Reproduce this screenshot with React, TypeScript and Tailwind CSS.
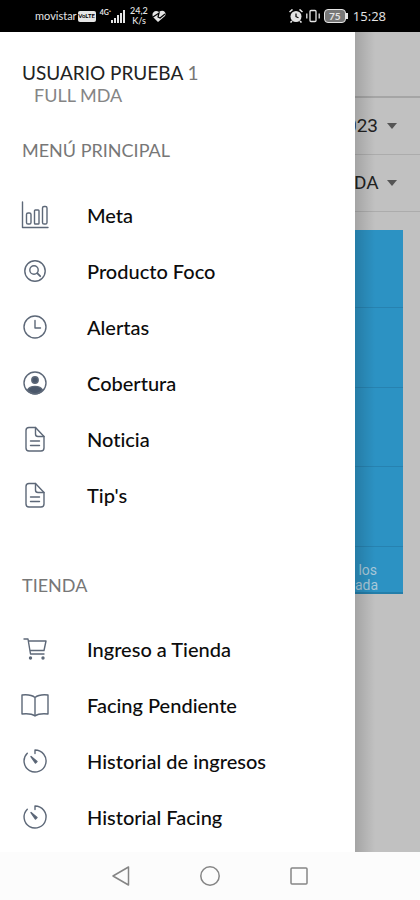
import React from "react";

type IconProps = { children: React.ReactNode };

function Icon({ children }: IconProps) {
  return (
    <svg viewBox="0 0 28 28" className="size-7 shrink-0" fill="none" stroke="#5d6878" strokeWidth="1.4" strokeLinejoin="round" strokeLinecap="round" aria-hidden="true">
      {children}
    </svg>
  );
}

const chart = (
  <Icon>
    <path d="M1.500 1v25.500H27" />
    <rect x="5.500" y="12" width="4.500" height="11" rx="1.600" />
    <rect x="13.500" y="9" width="4.500" height="14" rx=".8" />
    <rect x="21.500" y="5.500" width="4.500" height="17.500" rx="1.600" />
  </Icon>
);
const search = (
  <Icon>
    <circle cx="14" cy="14" r="10.200" />
    <circle cx="13" cy="13" r="4.200" />
    <path d="m16.200 16.200 3 3" strokeWidth="1.800" />
  </Icon>
);
const clock = (
  <Icon>
    <circle cx="14" cy="14" r="11" />
    <path d="M14 7.500V15h5.500" />
  </Icon>
);
const person = (
  <Icon>
    <circle cx="14" cy="14" r="11" />
    <circle cx="14" cy="11" r="3.200" fill="#4b586b" />
    <path d="M6.500 21c1.500-3 4.500-3.600 7.500-3.600s6 .6 7.500 3.600c-4 5-11 5-15 0Z" fill="#4b586b" />
  </Icon>
);
const doc = (
  <Icon>
    <path d="M8 2.500h6.500l8.500 9v11.500a3 3 0 0 1-3 3H8a3 3 0 0 1-3-3V5.500a3 3 0 0 1 3-3Z" />
    <path d="M14.500 2.500v6.500a2.500 2.500 0 0 0 2.500 2.500H23M9.500 16h9M9.500 20.500h9" />
  </Icon>
);
const cart = (
  <Icon>
    <path d="M3 4h4l2.500 15H23M7.500 6H25l-2 9.500H9" />
    <circle cx="9.500" cy="23" r="1" fill="#4b586b" />
    <circle cx="22" cy="23" r="1" fill="#4b586b" />
  </Icon>
);
const book = (
  <Icon>
    <path d="M14 6.500C11 4 6 3.500 1 4v19c5-.5 10-.2 13 2 3-2.200 8-2.500 13-2V4c-5-.5-10 0-13 2.500ZM14 6.500V25" />
  </Icon>
);
const timer = (
  <Icon>
    <path d="M14 6.500V3a11 11 0 1 1-7.700 3.200" />
    <path d="m10 9.500 6 5-1.500 1.500Z" fill="#4b586b" />
  </Icon>
);

const mainItems = [
  { label: "Meta", icon: chart },
  { label: "Producto Foco", icon: search },
  { label: "Alertas", icon: clock },
  { label: "Cobertura", icon: person },
  { label: "Noticia", icon: doc },
  { label: "Tip's", icon: doc },
];
const storeItems = [
  { label: "Ingreso a Tienda", icon: cart },
  { label: "Facing Pendiente", icon: book },
  { label: "Historial de ingresos", icon: timer },
  { label: "Historial Facing", icon: timer },
];

function MenuList({ items }: { items: typeof mainItems }) {
  return (
    <ul>
      {items.map((item) => (
        <li key={item.label}>
          <a href="#" className="flex h-14 items-center gap-[38px] pl-[21px] text-[20px] leading-6 font-medium text-[#0c0c0c]">
            {item.icon}
            <span>{item.label}</span>
          </a>
        </li>
      ))}
    </ul>
  );
}

function Filter({ name, value }: { name: string; value: string }) {
  return (
    <div className="flex h-[57px] items-center justify-end gap-2 border-b border-[#acacac] pr-[23px]">
      <select aria-label={name} className="shrink-0 appearance-none bg-transparent font-['Roboto',sans-serif] text-[19px] leading-6 text-[#222]">
        <option>{value}</option>
      </select>
      <svg viewBox="0 0 10 6" className="h-[6px] w-[10px] shrink-0" fill="#555" aria-hidden="true">
        <path d="M0 0h10L5 6Z" />
      </svg>
    </div>
  );
}

function StatusBar() {
  return (
    <header className="flex h-8 shrink-0 items-center justify-between bg-black pr-[34px] pl-[35px] text-[#e5e5e5]">
      <div className="flex items-center">
        <span className="text-[11px] leading-4">movistar</span>
        <span className="ml-px flex h-[11px] w-[18px] items-center justify-center rounded-[2px] bg-[#e5e5e5] text-[6px] leading-3 font-bold text-black">VoLTE</span>
        <span className="ml-1 self-start text-[7px] leading-3 font-bold">4G⁺</span>
        <svg viewBox="0 0 15 13" className="h-[13px] w-[15px]" fill="currentColor" aria-hidden="true">
          <path d="M0 10h2v3H0ZM3 8h2v5H3ZM6 5h2v8H6ZM9 3h2v10H9ZM12 0h2v13h-2Z" />
        </svg>
        <span className="ml-1 flex flex-col items-center text-[9px] leading-[10px] font-medium">
          <span>24,2</span>
          <span>K/s</span>
        </span>
        <svg viewBox="0 0 14 12" className="ml-1 h-3 w-[14px]" fill="currentColor" aria-hidden="true">
          <path d="M6 12 1 7C-1 3 3-1 7 2c4-3 8 0 6 4Z" />
          <path d="m1 7 6-4-1 4 2 1 5-4" fill="none" stroke="#000" strokeWidth="1.200" />
        </svg>
      </div>
      <div className="flex items-center">
        <svg viewBox="0 0 14 14" className="size-[14px]" fill="currentColor" aria-hidden="true">
          <circle cx="7" cy="7.500" r="5.500" />
          <path d="m.5 3 3-2.500M13.500 3l-3-2.500M3 12l-1.500 1.500M11 12l1.500 1.500" stroke="currentColor" strokeWidth="1.600" />
          <path d="M7 4.500v3.200l2.500 1" fill="none" stroke="#000" strokeWidth="1.200" />
        </svg>
        <svg viewBox="0 0 14 14" className="ml-[3px] size-[14px]" fill="none" stroke="currentColor" strokeWidth="1.300" aria-hidden="true">
          <rect x="4" y="1.500" width="6" height="11" rx="1" />
          <path d="M.8 4.500v5M13.200 4.500v5" />
        </svg>
        <span className="ml-1 flex h-[14px] w-[22px] items-center justify-center rounded-[4px] border border-[#e5e5e5] bg-[#777] text-[10px] leading-3 font-bold">75</span>
        <span className="h-[6px] w-[2px] bg-[#e5e5e5]" />
        <span className="ml-[5px] font-['Open_Sans',sans-serif] text-[13px] leading-4">15:28</span>
      </div>
    </header>
  );
}

export default function App() {
  return (
    <div className="flex min-h-screen flex-col bg-white font-['Lato','Open_Sans',sans-serif] [font-variant-ligatures:none]">
      <StatusBar />
      <main className="flex flex-1">
        <nav aria-label="Menú" className="min-w-0 flex-1 bg-white">
          <div className="px-[22px] pt-[29px]">
            <p className="text-[19px] leading-6 text-[#222]">USUARIO PRUEBA <span className="text-[#777]">1</span></p>
            <p className="pl-3 text-[18px] leading-5 text-[#858585]">FULL MDA</p>
          </div>
          <h2 className="px-[22px] pt-[33px] pb-[25px] text-[18px] leading-6 text-[#777]">MENÚ PRINCIPAL</h2>
          <MenuList items={mainItems} />
          <h2 className="px-[22px] pt-[50px] pb-[24px] text-[18px] leading-6 text-[#777]">TIENDA</h2>
          <MenuList items={storeItems} />
        </nav>
        <section className="relative w-[65px] shrink-0 overflow-hidden bg-[#c1c1c1]">
          <div className="h-[66px] border-b-2 border-[#a5a5a5]" />
          <Filter name="Fecha" value="023" />
          <Filter name="Tienda" value="DA" />
          <div className="mt-[18px] mr-[17px] border-b-2 border-[#237eaa] bg-[#2c92c3]">
            <div className="h-[78px] border-b border-[#2782b0]" />
            <div className="h-20 border-b border-[#2782b0]" />
            <div className="h-[79px] border-b border-[#2782b0]" />
            <div className="h-20 border-b border-[#2782b0]" />
            <p className="h-[45px] pt-4 pr-[26px] text-right font-['Roboto',sans-serif] text-[14px] leading-[15px] text-[#a9c9da]">los<br />ada</p>
          </div>
          <div className="pointer-events-none absolute inset-y-0 left-0 w-5 bg-linear-to-r from-black/15 to-transparent" />
        </section>
      </main>
      <footer className="flex h-12 shrink-0 items-center justify-center gap-[65px] bg-[#fcfcfc] text-[#858585]">
        <button aria-label="Atrás">
          <svg viewBox="0 0 24 24" className="size-6" fill="none" stroke="currentColor" strokeWidth="1.500" strokeLinejoin="round"><path d="M19.500 3v18L4 12Z" /></svg>
        </button>
        <button aria-label="Inicio">
          <svg viewBox="0 0 24 24" className="size-6" fill="none" stroke="currentColor" strokeWidth="1.500"><circle cx="12" cy="12" r="9.200" /></svg>
        </button>
        <button aria-label="Recientes">
          <svg viewBox="0 0 24 24" className="size-6" fill="none" stroke="currentColor" strokeWidth="1.500"><rect x="4" y="4" width="16" height="16" rx="1" /></svg>
        </button>
      </footer>
    </div>
  );
}
